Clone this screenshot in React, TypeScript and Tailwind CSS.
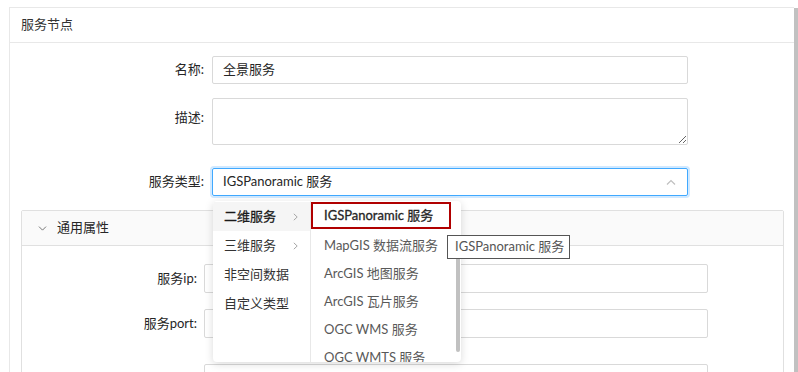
import { ChevronDown } from 'lucide-react'

const level1 = [
  { label: '二维服务', more: true, active: true },
  { label: '三维服务', more: true },
  { label: '非空间数据' },
  { label: '自定义类型' },
]

const level2 = ['MapGIS 数据流服务', 'ArcGIS 地图服务', 'ArcGIS 瓦片服务', 'OGC WMS 服务', 'OGC WMTS 服务']

function Arrow({ dir }: { dir: 'up' | 'right' }) {
  if (dir === 'up') {
    return (
      <svg width="10" height="6" viewBox="0 0 10 6" fill="none" stroke="#bfbfbf" strokeWidth="1.2">
        <path d="M1 5.5 L5 1.5 L9 5.5" />
      </svg>
    )
  }
  return (
    <svg width="5" height="8" viewBox="0 0 5 8" fill="none" stroke="#a6a6a6" strokeWidth="1">
      <path d="M0.8 0.8 L4.2 4 L0.8 7.2" />
    </svg>
  )
}

function Field({ label, children, top }: { label: string; children: React.ReactNode; top?: boolean }) {
  return (
    <div className={top ? 'flex items-start' : 'flex items-center'}>
      <div className={'w-[194px] shrink-0 text-right text-[#262626] ' + (top ? 'leading-[38px]' : '')}>{label}</div>
      <div className="ml-[8px] w-[476px]">{children}</div>
    </div>
  )
}

export default function App() {
  return (
    <div className="flex h-[372px] w-[798px] overflow-hidden bg-white pl-[9px] pt-[7px] font-['Lato','Noto_Sans_CJK_SC',sans-serif] text-[13px]">
      <div className="relative flex-1 border-l border-t border-[#e8e8e8]">
        <div className="flex h-[35px] items-center border-b border-[#e8e8e8] pl-[11px] text-[#333]">服务节点</div>

        <div className="pt-[13px]">
          <Field label="名称:">
            <div className="flex h-[28px] items-center rounded-[2px] border border-[#d9d9d9] px-[10px] text-[#262626]">
              全景服务
            </div>
          </Field>
          <div className="mt-[14px]">
            <Field label="描述:" top>
              <textarea className="block h-[47px] w-full rounded-[2px] border border-[#d9d9d9] outline-none" />
            </Field>
          </div>
          <div className="mt-[23px]">
            <Field label="服务类型:">
              <div className="flex h-[28px] items-center justify-between rounded-[2px] border border-[#40a9ff] px-[10px] text-[#262626] shadow-[0_0_0_2px_rgba(24,144,255,0.2)]">
                <span>IGSPanoramic 服务</span>
                <span className="mr-[1px] flex items-center">
                  <Arrow dir="up" />
                </span>
              </div>
            </Field>
          </div>

          <div className="ml-[11px] mt-[14px] w-[763px] rounded-[2px] border border-[#e0e0e0]">
            <div className="flex h-[35px] items-center border-b border-[#e0e0e0] bg-[#fafafa] pl-[14px] text-[#262626]">
              <ChevronDown className="h-[13px] w-[13px] text-[#595959]" strokeWidth={1.5} />
              <span className="ml-[8px]">通用属性</span>
            </div>
            <div className="pb-[20px] pt-[18px]">
              {['服务ip:', '服务port:', ''].map((l, i) => (
                <div key={i} className={'flex items-center ' + (i === 1 ? 'mt-[16px]' : i === 2 ? 'mt-[26px]' : '')}>
                  <div className="w-[175px] shrink-0 text-right text-[#262626]">{l}</div>
                  <div className="ml-[7px] h-[29px] w-[504px] rounded-[2px] border border-[#d9d9d9]" />
                </div>
              ))}
            </div>
          </div>
        </div>

        <div className="absolute left-[203px] top-[193px] flex h-[161px] w-[248px] overflow-hidden rounded-[4px] bg-white shadow-[0_2px_8px_rgba(0,0,0,0.15)]">
          <div className="w-[98px] border-r border-[#e8e8e8] pt-[1px]">
            {level1.map((it) => (
              <div
                key={it.label}
                className={
                  'flex h-[29px] items-center justify-between pl-[11px] pr-[12px] ' +
                  (it.active ? 'bg-[#f5f5f5] text-[#1a1a1a] [-webkit-text-stroke:0.3px_#1a1a1a]' : 'text-[#333]')
                }
              >
                <span>{it.label}</span>
                {it.more && <Arrow dir="right" />}
              </div>
            ))}
          </div>
          <div className="relative flex-1 pt-[1px]">
            <div className="mb-[3px] flex h-[27px] w-[140px] items-center border-2 border-[#b00000] pl-[11px] text-[#262626] [-webkit-text-stroke:0.3px_#262626]">
              IGSPanoramic 服务
            </div>
            {level2.map((t) => (
              <div key={t} className="flex h-[28px] items-center whitespace-nowrap pl-[13px] text-[#595959]">
                {t}
              </div>
            ))}
            <div className="absolute right-[1px] top-[54px] h-[97px] w-[4px] rounded-full bg-[#c1c1c1]" />
          </div>
        </div>

        <div className="absolute left-[437px] top-[227px] flex h-[24px] w-[123px] items-center whitespace-nowrap border border-[#555] bg-white pl-[7px] text-[#555]">
          IGSPanoramic 服务
        </div>
      </div>
      <div className="mt-[1px] w-[4px] shrink-0 bg-[#c1c1c1]" />
    </div>
  )
}
